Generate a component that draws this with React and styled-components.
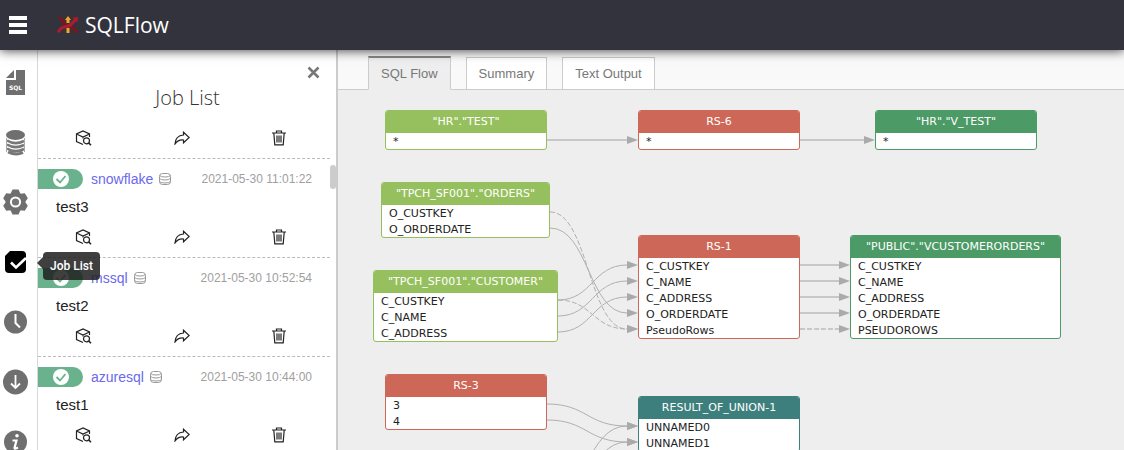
import React from "react";
import styled, { createGlobalStyle } from "styled-components";

const GlobalStyle = createGlobalStyle`
  *, *::before, *::after { box-sizing: border-box; }
  body { margin: 0; overflow: hidden; font-family: "Liberation Sans", Arial, sans-serif; }
  button { font: inherit; border: 0; padding: 0; background: none; color: inherit; cursor: pointer; }
  svg { display: block; flex: none; }
  a { text-decoration: none; }
`;

const Page = styled.div`
  display: flex;
  flex-direction: column;
  height: 100vh;
  overflow: hidden;
  background: #fff;
`;

const TopBar = styled.header`
  display: flex;
  align-items: center;
  gap: 30px;
  height: 50px;
  flex: none;
  padding: 0 9px;
  background: #33333d;
  box-shadow: 0 1px 10px rgba(0, 0, 0, 0.7);
  z-index: 2;
`;

const MenuButton = styled.button`
  display: flex;
  flex-direction: column;
  gap: 3px;
  width: 18px;
`;

const MenuBar = styled.span`
  height: 4px;
  background: #fff;
`;

const Brand = styled.a`
  display: flex;
  align-items: center;
  gap: 6px;
  color: #fff;
  font: 400 21px/28px "Open Sans", "Noto Sans", sans-serif;
`;

const Body = styled.div`
  display: flex;
  flex: 1;
  min-height: 0;
`;

const Rail = styled.nav`
  display: flex;
  flex-direction: column;
  gap: 32px;
  width: 38px;
  flex: none;
  padding: 18px 0 0 2px;
  border-right: 1px solid #d8d8d8;
`;

const RailButton = styled.button`
  display: flex;
  align-items: center;
  justify-content: center;
  width: 28px;
  height: 28px;
  flex: none;
  color: ${(p) => (p.$active ? "#000" : "#6f6f6f")};
`;

const RailSlot = styled.div`
  position: relative;
  height: 28px;
`;

const Tooltip = styled.span`
  position: absolute;
  left: 41px;
  top: 4px;
  z-index: 3;
  padding: 0 7px;
  border-radius: 4px;
  background: rgba(34, 34, 34, 0.87);
  color: #fff;
  font: 500 12px/28px Roboto, sans-serif;
  white-space: nowrap;

  &::before {
    content: "";
    position: absolute;
    left: -6px;
    top: 5px;
    border: solid transparent;
    border-width: 6px 6px 6px 0;
    border-right-color: rgba(34, 34, 34, 0.87);
  }
`;

const Panel = styled.aside`
  display: flex;
  flex-direction: column;
  width: 300px;
  flex: none;
  border-right: 2px solid #ccc;
`;

const PanelHead = styled.div`
  display: flex;
  flex-direction: column;
  height: 67px;
  flex: none;
  padding: 16px 16px 0 0;
`;

const CloseButton = styled.button`
  align-self: flex-end;
  color: #777;
`;

const PanelTitle = styled.h1`
  margin: 5px 0 0;
  padding-left: 17px;
  text-align: center;
  color: #333;
  font: 300 20px/28px "Open Sans", sans-serif;
`;

const ListArea = styled.div`
  display: flex;
  flex: 1;
  min-height: 0;
  overflow: hidden;
`;

const List = styled.ul`
  flex: 1;
  margin: 0;
  padding: 0;
  list-style: none;
`;

const ScrollThumb = styled.div`
  width: 6px;
  height: 24px;
  margin-top: 48px;
  border-radius: 3px;
  background: #ccc;
`;

const JobItem = styled.li`
  border-bottom: 1px dashed #bbb;
`;

const JobHead = styled.div`
  display: flex;
  align-items: center;
  height: 40px;
  padding-right: 18px;
`;

const Status = styled.span`
  display: flex;
  align-items: center;
  justify-content: center;
  width: 45px;
  height: 20px;
  margin-right: 8px;
  border-radius: 0 10px 10px 0;
  background: #69b28d;
`;

const JobLink = styled.a`
  margin-right: 6px;
  color: #6a6aeb;
  font-size: 14px;
`;

const JobDate = styled.time`
  margin-left: auto;
  color: #a0a0a0;
  font-size: 12px;
`;

const JobName = styled.div`
  height: 17px;
  padding-left: 18px;
  color: #222;
  font-size: 15px;
  line-height: 15px;
`;

const Actions = styled.div`
  display: flex;
  align-items: center;
  justify-content: space-between;
  height: 41px;
  padding: 0 42px 0 37px;
  color: #222;
`;

const ActionButton = styled.button`
  display: flex;
  align-items: center;
  justify-content: center;
  width: 18px;
  height: 16px;
`;

const Main = styled.main`
  display: flex;
  flex-direction: column;
  flex: 1;
  min-width: 0;
  background: #eee;
`;

const Tabs = styled.div`
  display: flex;
  align-items: flex-end;
  gap: 15px;
  height: 40px;
  flex: none;
  padding-left: 30px;
  background: #f9f9f9;
  box-shadow: inset 0 -1px #ccc;
`;

const Tab = styled.button`
  height: ${(p) => (p.$active ? 34 : 33)}px;
  padding: 0 12px;
  border: 1px solid #ccc;
  border-top: ${(p) => (p.$active ? "2px solid #888" : "1px solid #ccc")};
  border-bottom-color: ${(p) => (p.$active ? "#eee" : "#ccc")};
  background: ${(p) => (p.$active ? "#eee" : "#fff")};
  color: #777;
  font-size: 13px;
`;

const Canvas = styled.div`
  position: relative;
  flex: 1;
  overflow: hidden;
`;

const Edges = styled.svg`
  position: absolute;
  inset: 0;
  width: 100%;
  height: 100%;
`;

const NodeBox = styled.section`
  position: absolute;
  border: 1px solid ${(p) => p.$color};
  border-radius: 3px;
  background: #fff;
  overflow: hidden;
`;

const NodeTitle = styled.h2`
  margin: 0;
  background: ${(p) => p.$color};
  color: #fff;
  text-align: center;
  font: 400 11px/22px "DejaVu Sans", sans-serif;
`;

const NodeRow = styled.div`
  height: 16px;
  padding-left: 7px;
  color: #222;
  font: 11px/18px "DejaVu Sans", sans-serif;
  white-space: nowrap;
`;

const GREEN = "#96bf5e";
const RED = "#cd6858";
const DARK_GREEN = "#4c9a66";
const TEAL = "#3d7f7c";

const nodes = {
  test: { x: 47, y: 20, w: 162, color: GREEN, title: '"HR"."TEST"', rows: ["*"] },
  rs6: { x: 300, y: 20, w: 162, color: RED, title: "RS-6", rows: ["*"] },
  vtest: { x: 537, y: 20, w: 162, color: DARK_GREEN, title: '"HR"."V_TEST"', rows: ["*"] },
  orders: { x: 43, y: 92, w: 169, color: GREEN, title: '"TPCH_SF001"."ORDERS"', rows: ["O_CUSTKEY", "O_ORDERDATE"] },
  customer: { x: 35, y: 180, w: 185, color: GREEN, title: '"TPCH_SF001"."CUSTOMER"', rows: ["C_CUSTKEY", "C_NAME", "C_ADDRESS"] },
  rs1: { x: 300, y: 145, w: 162, color: RED, title: "RS-1", rows: ["C_CUSTKEY", "C_NAME", "C_ADDRESS", "O_ORDERDATE", "PseudoRows"] },
  view: { x: 512, y: 145, w: 211, color: DARK_GREEN, title: '"PUBLIC"."VCUSTOMERORDERS"', rows: ["C_CUSTKEY", "C_NAME", "C_ADDRESS", "O_ORDERDATE", "PSEUDOROWS"] },
  rs3: { x: 47, y: 284, w: 162, color: RED, title: "RS-3", rows: ["3", "4"] },
  union: { x: 300, y: 306, w: 162, color: TEAL, title: "RESULT_OF_UNION-1", rows: ["UNNAMED0", "UNNAMED1"] },
};

// Sources below the visible part of the canvas: only their edges are drawn.
const anchors = {
  lower: { x: 47, y: 378, w: 162 },
};

const edges = [
  ["test", 0, "rs6", 0],
  ["rs6", 0, "vtest", 0],
  ["orders", 0, "rs1", 4, true],
  ["orders", 1, "rs1", 3],
  ["customer", 0, "rs1", 0],
  ["customer", 0, "rs1", 4, true],
  ["customer", 1, "rs1", 1],
  ["customer", 2, "rs1", 2],
  ["rs1", 0, "view", 0],
  ["rs1", 1, "view", 1],
  ["rs1", 2, "view", 2],
  ["rs1", 3, "view", 3],
  ["rs1", 4, "view", 4, true],
  ["rs3", 0, "union", 0],
  ["rs3", 1, "union", 1],
  ["lower", 0, "union", 0],
  ["lower", 1, "union", 1],
];

const rowY = (node, row) => node.y + 30 + row * 16;

function Edge({ edge: [from, fromRow, to, toRow, dashed] }) {
  const source = nodes[from] || anchors[from];
  const x1 = source.x + source.w;
  const y1 = rowY(source, fromRow);
  const tip = nodes[to].x;
  const x2 = tip - 11;
  const y2 = rowY(nodes[to], toRow);
  const mid = (x1 + x2) / 2;
  const straight = y1 === y2;
  return (
    <g>
      <path
        d={`M${x1} ${y1}C${mid} ${y1} ${mid} ${y2} ${x2} ${y2}`}
        fill="none"
        stroke={straight ? "#c8c8c8" : "#b0b0b0"}
        strokeWidth={straight ? 2 : 1}
        strokeDasharray={dashed ? "5 2" : undefined}
      />
      <path d={`M${x2} ${y2 - 4}L${tip} ${y2}L${x2} ${y2 + 4}Z`} fill="#aaa" />
    </g>
  );
}

const FileSqlIcon = () => (
  <svg width="28" height="28" viewBox="0 0 28 28" fill="currentColor">
    <path d="M14 2h9v25H4V12h10zM4 10l8-8v8z" />
    <text x="13.5" y="22" textAnchor="middle" fontSize="6" fontWeight="700" fontFamily="DejaVu Sans, sans-serif" fill="#fff">SQL</text>
  </svg>
);
const StackIcon = () => (
  <svg width="28" height="28" viewBox="0 0 28 28" fill="none">
    <path d="M5 12.500q8 5 17 .5M5 16.500q8 5 17 .5M5 20.500q8 5 17 .5M6 24q8 4 15 .5" stroke="#777" strokeWidth="2.600" />
    <path d="M4.500 10v14M22.500 10v14" stroke="#aaa" />
    <ellipse cx="13.500" cy="7" rx="9.500" ry="5" fill="#6f6f6f" />
  </svg>
);
const GearIcon = () => (
  <svg width="28" height="28" viewBox="0 0 28 28">
    <g fill="currentColor">
      <circle cx="13.500" cy="14" r="9.800" />
      {[0, 60, 120].map((a) => (
        <path key={a} d="M8.500 6L10.500 1.500h6L18.500 6v16L16.500 26.500h-6L8.500 22z" transform={`rotate(${a} 13.500 14)`} />
      ))}
    </g>
    <circle cx="13.500" cy="14" r="4.600" fill="#777" stroke="#fff" strokeWidth="2" />
  </svg>
);
const JobsIcon = () => (
  <svg width="28" height="28" viewBox="0 0 28 28">
    <path d="M8 3h12q4 0 4 4v14q0 4-4 4H7q-4 0-4-4V8z" fill="currentColor" />
    <path d="M9 14.500l5 5L24 10" fill="none" stroke="#fff" strokeWidth="2.600" />
  </svg>
);
const ClockIcon = () => (
  <svg width="28" height="28" viewBox="0 0 28 28">
    <circle cx="13.500" cy="14" r="11.500" fill="currentColor" />
    <path d="M13.500 6v9l4.500 4.500" fill="none" stroke="#fff" strokeWidth="2" />
  </svg>
);
const DownIcon = () => (
  <svg width="28" height="28" viewBox="0 0 28 28">
    <circle cx="13.500" cy="14" r="12.500" fill="currentColor" />
    <path d="M13.500 7v13M9 15.500l4.500 4.500 4.500-4.500" fill="none" stroke="#fff" strokeWidth="1.800" />
  </svg>
);
const InfoIcon = () => (
  <svg width="28" height="28" viewBox="0 0 28 28">
    <circle cx="13.500" cy="14" r="11.500" fill="currentColor" />
    <circle cx="15" cy="7.800" r="1.800" fill="#fff" />
    <path d="M10.500 12.500h4l-2 7.500q0 1.500 3.500-.5" fill="none" stroke="#fff" strokeWidth="2.200" />
  </svg>
);
const LogoIcon = () => (
  <svg width="22" height="18" viewBox="0 0 22 18" fill="none">
    <path d="M2 2Q4.500 2.500 5.500 5T9 8.500M14 11Q16.500 11.500 17.500 13.500T20.500 16.500" stroke="#7d1420" strokeWidth="3.200" />
    <path d="M11 0l3 4h-1.500v3h-3V4H8z" fill="#f2a526" />
    <rect x="9.500" y="12" width="3" height="5" fill="#f2a526" />
    <path d="M1.500 16.500Q2.500 12 7.500 11T14 8.500 18.500 3.500" stroke="#ad1b2c" strokeWidth="3.200" />
    <path d="M15.500 1.500l5.500-.5-.5 5.500z" fill="#ad1b2c" />
  </svg>
);
const CheckIcon = () => (
  <svg width="16" height="16" viewBox="0 0 16 16">
    <circle cx="8" cy="8" r="8" fill="#fff" />
    <path d="M3.500 8l3.500 3.500L12.500 5" fill="none" stroke="#69b28d" strokeWidth="1.800" />
  </svg>
);
const DatabaseIcon = () => (
  <svg width="12" height="12" viewBox="0 0 12 12" fill="none" stroke="#999">
    <rect x=".5" y=".5" width="11" height="11" rx="3" />
    <path d="M.5 2.500q1 1.500 5.500 1.500t5.500-1.500M.5 5.500Q2 7 6 7t5.500-1.500M.5 8.500Q2 10 6 10t5.500-1.500" />
  </svg>
);
const CubeSearchIcon = () => (
  <svg width="18" height="16" viewBox="0 0 18 16" fill="none" stroke="currentColor" strokeWidth="1.200">
    <path d="M8 14.500l-6.500-3V4L8 1l6.500 3v3M1.500 4L8 7l6.500-3M8 7v1.500" />
    <circle cx="11.500" cy="10.800" r="3" />
    <path d="M13.800 13L16 15.300" strokeWidth="1.600" />
  </svg>
);
const ShareIcon = () => (
  <svg width="16" height="14" viewBox="0 0 16 14" fill="none" stroke="currentColor" strokeWidth="1.200">
    <path d="M9.500 1.200L15.200 6.500 9.500 11.800V9Q4 8.500 1 13 1.500 4.500 9.500 4z" />
  </svg>
);
const TrashIcon = () => (
  <svg width="14" height="16" viewBox="0 0 14 16" fill="none" stroke="currentColor" strokeWidth="1.200">
    <path d="M0 3h14M4.500 3V1h5v2M1.800 3l1 11.800h8.400l1-11.800M5 5.500v7M7 5.500v7M9 5.500v7" />
  </svg>
);
const CloseIcon = () => (
  <svg width="13" height="13" viewBox="0 0 13 13" fill="none" stroke="currentColor" strokeWidth="2.600">
    <path d="M1.500 1.500l10 10M11.500 1.500l-10 10" />
  </svg>
);

const railItems = [
  ["SQL", FileSqlIcon],
  ["Databases", StackIcon],
  ["Settings", GearIcon],
  ["Job List", JobsIcon, true],
  ["History", ClockIcon],
  ["Download", DownIcon],
  ["About", InfoIcon],
];

const jobs = [
  { db: "snowflake", date: "2021-05-30 11:01:22", name: "test3" },
  { db: "mssql", date: "2021-05-30 10:52:54", name: "test2" },
  { db: "azuresql", date: "2021-05-30 10:44:00", name: "test1" },
];

const JobActions = () => (
  <Actions>
    <ActionButton aria-label="View lineage"><CubeSearchIcon /></ActionButton>
    <ActionButton aria-label="Share"><ShareIcon /></ActionButton>
    <ActionButton aria-label="Delete"><TrashIcon /></ActionButton>
  </Actions>
);

export default function App() {
  return (
    <Page>
      <GlobalStyle />
      <TopBar>
        <MenuButton aria-label="Menu"><MenuBar /><MenuBar /><MenuBar /></MenuButton>
        <Brand href="#"><LogoIcon />SQLFlow</Brand>
      </TopBar>
      <Body>
        <Rail>
          {railItems.map(([label, Icon, active]) => (
            <RailSlot key={label}>
              <RailButton aria-label={label} $active={active}><Icon /></RailButton>
              {active && <Tooltip role="tooltip">{label}</Tooltip>}
            </RailSlot>
          ))}
        </Rail>
        <Panel>
          <PanelHead>
            <CloseButton aria-label="Close"><CloseIcon /></CloseButton>
            <PanelTitle>Job List</PanelTitle>
          </PanelHead>
          <ListArea>
            <List>
              <JobItem><JobActions /></JobItem>
              {jobs.map((job) => (
                <JobItem key={job.name}>
                  <JobHead>
                    <Status><CheckIcon /></Status>
                    <JobLink href="#">{job.db}</JobLink>
                    <DatabaseIcon />
                    <JobDate>{job.date}</JobDate>
                  </JobHead>
                  <JobName>{job.name}</JobName>
                  <JobActions />
                </JobItem>
              ))}
            </List>
            <ScrollThumb />
          </ListArea>
        </Panel>
        <Main>
          <Tabs role="tablist">
            <Tab role="tab" aria-selected="true" $active>SQL Flow</Tab>
            <Tab role="tab" aria-selected="false">Summary</Tab>
            <Tab role="tab" aria-selected="false">Text Output</Tab>
          </Tabs>
          <Canvas>
            <Edges>
              {edges.map((edge) => <Edge key={edge.join()} edge={edge} />)}
            </Edges>
            {Object.entries(nodes).map(([id, n]) => (
              <NodeBox key={id} $color={n.color} style={{ left: n.x, top: n.y, width: n.w }}>
                <NodeTitle $color={n.color}>{n.title}</NodeTitle>
                {n.rows.map((row) => <NodeRow key={row}>{row}</NodeRow>)}
              </NodeBox>
            ))}
          </Canvas>
        </Main>
      </Body>
    </Page>
  );
}
